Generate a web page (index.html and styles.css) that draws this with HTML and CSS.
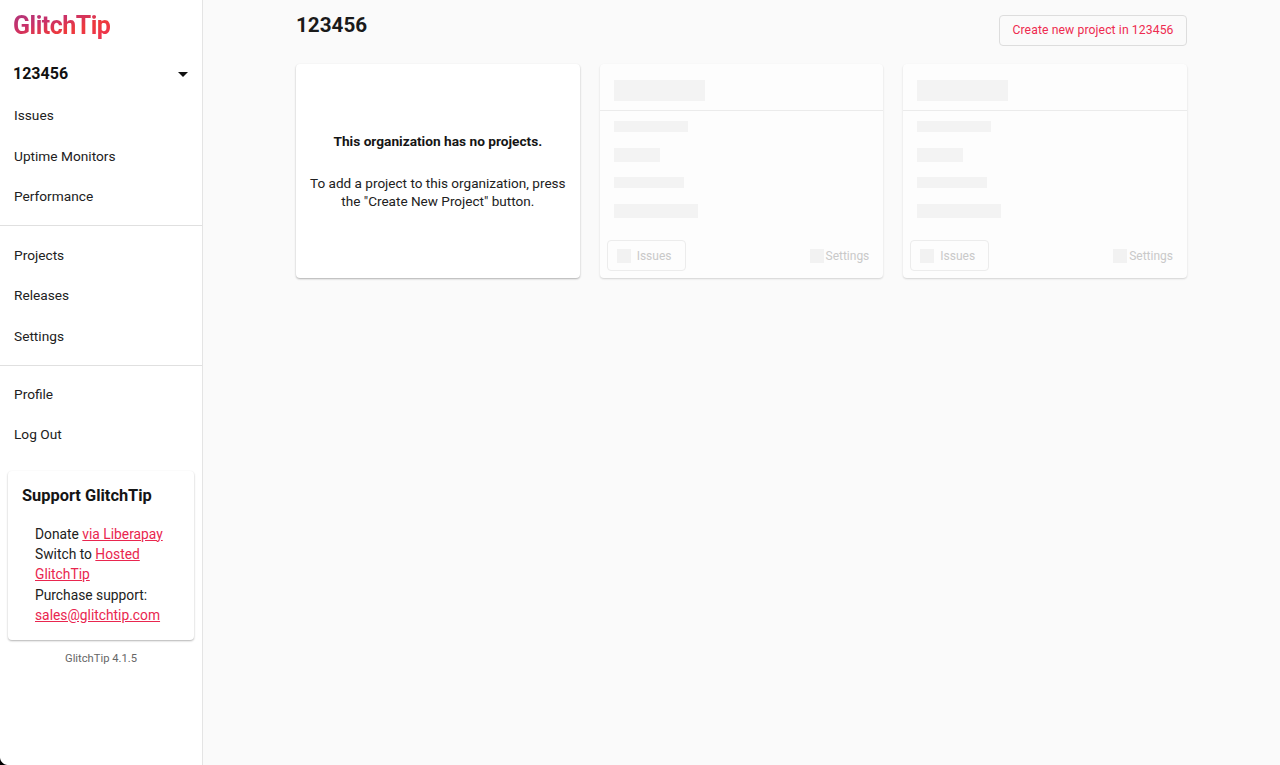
FILE: index.html
```html
<!DOCTYPE html>
<html lang="en">
<head>
<meta charset="utf-8">
<title>GlitchTip</title>
<link rel="stylesheet" href="styles.css">
</head>
<body>
<div class="app">
  <aside class="sidebar">
    <div class="logo">GlitchTip</div>
    <div class="org"><span>123456</span><i class="caret"></i></div>
    <nav class="nav">
      <a>Issues</a>
      <a>Uptime Monitors</a>
      <a>Performance</a>
    </nav>
    <hr class="rule">
    <nav class="nav">
      <a>Projects</a>
      <a>Releases</a>
      <a>Settings</a>
    </nav>
    <hr class="rule tight">
    <nav class="nav">
      <a>Profile</a>
      <a>Log Out</a>
    </nav>
    <section class="support">
      <h2>Support GlitchTip</h2>
      <p>Donate <a href="#">via Liberapay</a><br>Switch to <a href="#">Hosted GlitchTip</a><br>Purchase support: <a href="#">sales@glitchtip.com</a></p>
    </section>
    <div class="version">GlitchTip 4.1.5</div>
  </aside>
  <main class="main">
    <header class="head">
      <h1>123456</h1>
      <button class="create">Create new project in 123456</button>
    </header>
    <div class="grid">
      <article class="card empty">
        <strong>This organization has no projects.</strong>
        <p>To add a project to this organization, press the "Create New Project" button.</p>
      </article>
      <article class="card ghost">
        <div class="ghost-top"><div class="bar title"></div></div>
        <div class="ghost-body">
          <div class="bar b1"></div><div class="bar b2"></div><div class="bar b3"></div><div class="bar b4"></div>
        </div>
        <div class="ghost-foot">
          <span class="ghost-btn"><i class="sq"></i>Issues</span>
          <span class="ghost-link"><i class="sq"></i>Settings</span>
        </div>
      </article>
      <article class="card ghost">
        <div class="ghost-top"><div class="bar title"></div></div>
        <div class="ghost-body">
          <div class="bar b1"></div><div class="bar b2"></div><div class="bar b3"></div><div class="bar b4"></div>
        </div>
        <div class="ghost-foot">
          <span class="ghost-btn"><i class="sq"></i>Issues</span>
          <span class="ghost-link"><i class="sq"></i>Settings</span>
        </div>
      </article>
    </div>
  </main>
</div>
<div class="corner"></div>
</body>
</html>
```
FILE: styles.css
```css
* { box-sizing: border-box; }
html, body { margin: 0; height: 100%; }
body { position: relative; font-family: Roboto, "Noto Sans", sans-serif; font-size: 14px; color: #212121; background: #fafafa; overflow: hidden; }
.app { display: flex; height: 765px; }
.sidebar { width: 203px; flex: none; background: #fff; border-right: 1px solid #e4e4e4; padding-top: 9px; }
.logo { margin-left: 13px; height: 33px; font-size: 25px; line-height: 33px; font-weight: 700; letter-spacing: -0.5px; width: max-content; background: linear-gradient(165deg, #a8377f 0%, #c9316a 35%, #ee3a3c 62%, #ee3157 100%); -webkit-background-clip: text; background-clip: text; color: transparent; }
.org { display: flex; align-items: center; justify-content: space-between; margin-top: 20px; padding: 0 14px 0 13px; height: 22px; font-size: 16px; font-weight: 700; color: #111; }
.caret { width: 0; height: 0; border: 5.5px solid transparent; border-top: 5px solid #111; border-bottom: 0; margin-top: 3px; }
.nav { display: flex; flex-direction: column; }
.nav a { height: 40.6px; padding-left: 14px; line-height: 40px; font-size: 13.7px; color: #212121; }
.org + .nav { margin-top: 11px; }
.rule { margin: 8px 0 9px; border: 0; border-top: 1px solid #e0e0e0; }
.rule.tight { margin-bottom: 8px; }
.support { margin: 16px 8px 0; height: 169px; background: #fff; border-radius: 4px; box-shadow: 0 1px 2px rgba(0,0,0,.3); padding: 14px 14px 0; }
.support h2 { margin: 0; font-size: 16.4px; line-height: 22px; font-weight: 700; color: #151515; }
.support p { margin: 17px 0 0 13px; font-size: 13.8px; line-height: 20.3px; }
.support a { color: #e9264f; text-decoration: underline; }
.version { margin-top: 11px; text-align: center; font-size: 11.2px; line-height: 15px; color: #666; }
.main { flex: 1; padding: 0 93px; }
.head { display: flex; justify-content: space-between; align-items: flex-start; height: 64px; }
.head h1 { margin: 12px 0 0; font-size: 20.7px; line-height: 26px; font-weight: 700; color: #1a1a1a; }
.create { margin-top: 15px; width: 188px; height: 31px; padding: 0 0 2px; background: #fafafa; border: 1px solid #ddd; border-radius: 4px; color: #ee2b50; font: 400 12.2px Roboto, sans-serif; letter-spacing: 0.1px; }
.grid { display: grid; grid-template-columns: repeat(3, 1fr); gap: 20px; }
.card { height: 214px; background: #fff; border-radius: 4px; box-shadow: 0 1px 2px rgba(0,0,0,.3); }
.empty { display: flex; flex-direction: column; align-items: center; padding: 68px 10px 0; text-align: center; }
.empty strong { font-size: 13.7px; line-height: 18px; font-weight: 700; color: #151515; }
.empty p { margin: 24px 0 0; font-size: 13.55px; line-height: 18px; }
.ghost { display: flex; flex-direction: column; background: #fdfdfd; box-shadow: 0 1px 2px rgba(0,0,0,.16); }
.bar { background: #f3f3f3; }
.ghost-top { height: 47px; padding: 16px 14px 0; border-bottom: 1px solid #ebebeb; }
.title { width: 91px; height: 21px; }
.ghost-body { flex: 1; padding: 10px 14px 0; display: flex; flex-direction: column; align-items: flex-start; }
.b1 { width: 74px; height: 11px; }
.b2 { width: 46px; height: 14px; margin-top: 16px; }
.b3 { width: 70px; height: 11px; margin-top: 15px; }
.b4 { width: 84px; height: 14px; margin-top: 16px; }
.ghost-foot { display: flex; justify-content: space-between; align-items: center; padding: 0 14px 7px 7px; }
.ghost-btn { display: flex; align-items: center; width: 79px; height: 31px; padding-left: 9px; border: 1px solid #ececec; border-radius: 4px; }
.ghost-link { display: flex; align-items: center; }
.ghost-foot span { font-size: 12px; color: #c9c9c9; }
.sq { width: 14px; height: 14px; background: #f2f2f2; }
.ghost-btn .sq { margin-right: 6px; }
.ghost-link .sq { margin-right: 2px; }
.corner { position: absolute; left: 0; bottom: 0; width: 8px; height: 8px; background: radial-gradient(circle at 100% 0, transparent 7.5px, #000 8.5px); }
```
